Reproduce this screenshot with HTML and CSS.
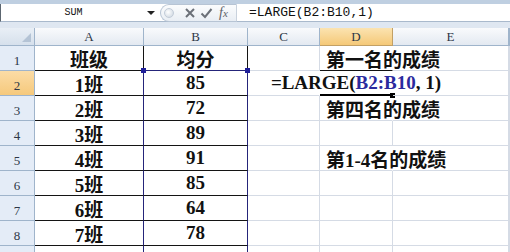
FILE: index.html
```html
<!DOCTYPE html>
<html lang="zh-CN">
<head>
  <meta charset="UTF-8" />
  <title>LARGE</title>
  <link rel="stylesheet" href="styles.css">
</head>
<body>
  <div class="window">
    <div class="top-strip"></div>

    <div class="formula-bar">
      <div class="name-box">SUM</div>
      <div class="name-drop"><span class="arrow"></span></div>
      <div class="fx-group">
        <span class="knob"></span>
        <svg class="fx-btn" width="12" height="12" viewBox="0 0 12 12">
          <path d="M2 2 L10 10 M10 2 L2 10" stroke="#6b7078" stroke-width="2" fill="none"/>
        </svg>
        <svg class="fx-btn" width="13" height="12" viewBox="0 0 13 12">
          <path d="M1.5 6.5 L5 10 L11.5 2" stroke="#6b7078" stroke-width="2" fill="none"/>
        </svg>
        <span class="fx-label">f<small>x</small></span>
      </div>
      <div class="formula-text">=LARGE(B2:B10,1)</div>
    </div>

    <div class="gap-strip"></div>

    <div class="sheet">
      <!-- header row -->
      <div class="cell corner"><span class="tri"></span></div>
      <div class="cell col-head">A</div>
      <div class="cell col-head">B</div>
      <div class="cell col-head">C</div>
      <div class="cell col-head on">D</div>
      <div class="cell col-head">E</div>
      <div class="cell col-head"></div>

      <!-- 1 -->
      <div class="cell row-head">1</div>
      <div class="cell boxed">班级</div>
      <div class="cell boxed range-top">均分</div>
      <div class="cell"></div>
      <div class="cell note under">第一名的成绩</div>
      <div class="cell"></div>
      <div class="cell"></div>

      <!-- 2 -->
      <div class="cell row-head on">2</div>
      <div class="cell boxed range-left">1班</div>
      <div class="cell boxed range">85<span class="handle hl"></span><span class="handle hr"></span></div>
      <div class="cell spill"></div>
      <div class="cell edit">=LARGE(<span class="ref">B2:B10</span>, 1)<span class="fill"></span></div>
      <div class="cell"></div>
      <div class="cell"></div>

      <!-- 3 -->
      <div class="cell row-head">3</div>
      <div class="cell boxed range-left">2班</div>
      <div class="cell boxed range">72</div>
      <div class="cell"></div>
      <div class="cell note">第四名的成绩</div>
      <div class="cell"></div>
      <div class="cell"></div>

      <!-- 4 -->
      <div class="cell row-head">4</div>
      <div class="cell boxed range-left">3班</div>
      <div class="cell boxed range">89</div>
      <div class="cell"></div>
      <div class="cell"></div>
      <div class="cell"></div>
      <div class="cell"></div>

      <!-- 5 -->
      <div class="cell row-head">5</div>
      <div class="cell boxed range-left">4班</div>
      <div class="cell boxed range">91</div>
      <div class="cell"></div>
      <div class="cell note">第1-4名的成绩</div>
      <div class="cell"></div>
      <div class="cell"></div>

      <!-- 6 -->
      <div class="cell row-head">6</div>
      <div class="cell boxed range-left">5班</div>
      <div class="cell boxed range">85</div>
      <div class="cell"></div>
      <div class="cell"></div>
      <div class="cell"></div>
      <div class="cell"></div>

      <!-- 7 -->
      <div class="cell row-head">7</div>
      <div class="cell boxed range-left">6班</div>
      <div class="cell boxed range">64</div>
      <div class="cell"></div>
      <div class="cell"></div>
      <div class="cell"></div>
      <div class="cell"></div>

      <!-- 8 -->
      <div class="cell row-head">8</div>
      <div class="cell boxed range-left">7班</div>
      <div class="cell boxed range">78</div>
      <div class="cell"></div>
      <div class="cell"></div>
      <div class="cell"></div>
      <div class="cell"></div>

      <!-- 9 (only its top edge shows) -->
      <div class="cell row-head"></div>
      <div class="cell boxed range-left"></div>
      <div class="cell boxed range"></div>
      <div class="cell"></div>
      <div class="cell"></div>
      <div class="cell"></div>
      <div class="cell"></div>
    </div>
  </div>
</body>
</html>
```

FILE: styles.css
```css
* {
  box-sizing: border-box;
  margin: 0;
  padding: 0;
}

body {
  width: 510px;
  height: 252px;
  overflow: hidden;
  background: #fff;
  font-family: "Liberation Serif", "Noto Sans CJK SC", serif;
}

.window {
  width: 510px;
}

.top-strip {
  height: 4px;
  background: #bfcfe1;
}

/* formula bar */
.formula-bar {
  display: flex;
  align-items: center;
  height: 18px;
  background: #fff;
  border-left: 1px solid #5c6670;
  border-bottom: 1px solid #a9b9cc;
}

.name-box {
  width: 143px;
  text-align: center;
  font: 10px "Liberation Mono", monospace;
  color: #111;
  padding-left: 2px;
}

.name-drop {
  width: 14px;
  display: flex;
  justify-content: center;
}

.arrow {
  width: 0;
  height: 0;
  border-left: 4px solid transparent;
  border-right: 4px solid transparent;
  border-top: 4px solid #222;
}

.fx-group {
  display: flex;
  align-items: center;
  gap: 4px;
  height: 18px;
  width: 77px;
  margin-left: 2px;
  padding-left: 3px;
  border: 1px solid #b7c4d4;
  border-right-color: #c9d2dd;
  border-radius: 9px 0 0 9px;
  background: linear-gradient(#fbfcfd, #e9eef4);
}

.knob {
  width: 10px;
  height: 10px;
  border-radius: 50%;
  background: radial-gradient(circle at 40% 40%, #ffffff, #c9d3de);
  border: 1px solid #c2ccd8;
  margin-right: 6px;
}

.fx-label {
  font: italic 14px "Liberation Serif", serif;
  color: #5d6168;
  margin-left: 2px;
}

.fx-label small {
  font-size: 11px;
}

.formula-text {
  flex: 1;
  padding-left: 12px;
  font: 13px "Liberation Mono", monospace;
  color: #111;
}

.gap-strip {
  height: 6px;
  background: #dfe7f1;
}

/* sheet grid */
.sheet {
  display: grid;
  grid-template-columns: 35px 109px 104px 72px 73px 116px 1fr;
  grid-template-rows: 18px;
  grid-auto-rows: 25px;
}

.cell {
  position: relative;
  display: flex;
  align-items: center;
  white-space: nowrap;
  min-width: 0;
  border-right: 1px solid #d5dbe5;
  border-bottom: 1px solid #d5dbe5;
  font-size: 19px;
  font-weight: 600;
  color: #111;
}

.col-head,
.row-head,
.corner {
  justify-content: center;
  font-size: 13px;
  font-weight: normal;
  color: #2c3646;
  border-color: #9fb4cb;
}

.col-head {
  background: linear-gradient(#f9fafc, #e3e9f1);
  padding-top: 1px;
}

.col-head.on {
  background: linear-gradient(#fbe3b1, #f5c978);
  border-color: #c2a065;
}

.corner {
  background: linear-gradient(#e9eff6, #d6e0ec);
}

.tri {
  position: absolute;
  right: 3px;
  bottom: 3px;
  width: 0;
  height: 0;
  border-left: 9px solid transparent;
  border-bottom: 9px solid #b4c3d5;
}

.row-head {
  background: #e4ecf7;
  padding-top: 5px;
}

.row-head.on {
  background: linear-gradient(#fbdca6, #f6c97c);
}

.boxed {
  justify-content: center;
  border-color: #141414;
}

.range-top {
  border-bottom-color: #25257a;
}

.range-left,
.range {
  border-right-color: #25257a;
}

.handle {
  position: absolute;
  top: -3px;
  width: 5px;
  height: 5px;
  background: #1f1f9a;
}

.hl {
  left: -3px;
}

.hr {
  right: -3px;
}

.note {
  padding-left: 6px;
  border-right-color: transparent;
}

.under {
  border-bottom-color: #111;
}

.spill {
  border-right-color: transparent;
}

.edit {
  justify-content: center;
  overflow: visible;
  border-bottom: 2px solid #000;
  border-right-color: transparent;
}

.ref {
  color: #2a2a9e;
}

.fill {
  position: absolute;
  right: -3px;
  bottom: -4px;
  width: 5px;
  height: 5px;
  background: #000;
}
```
